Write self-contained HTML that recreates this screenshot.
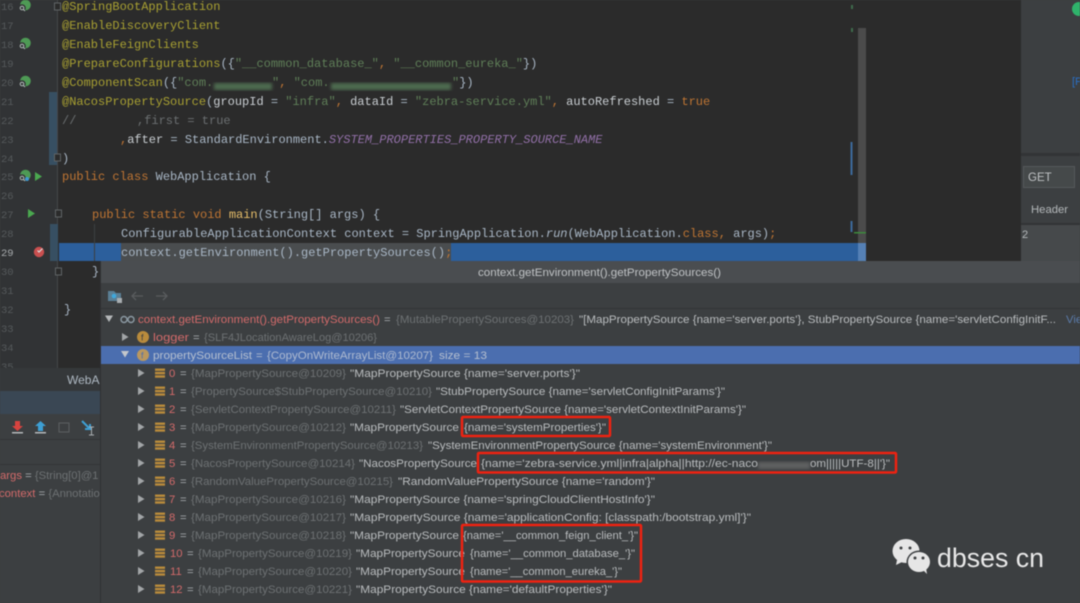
<!DOCTYPE html>
<html><head><meta charset="utf-8"><style>
html,body{margin:0;padding:0;background:#3c3f41;width:1080px;height:603px;overflow:hidden}
svg{display:block}
.m{font-family:"Liberation Mono",monospace;font-size:12px;fill:#a9b7c6}
.s{font-family:"Liberation Sans",sans-serif;font-size:11.3px;fill:#b9bcbe}
.n{font-family:"Liberation Mono",monospace;font-size:10.5px;fill:#55595b}
.y{fill:#a8a032}.g{fill:#5f7f58}.o{fill:#bf7533}.c{fill:#6b6f71}.p{fill:#9270a8;font-style:italic}.w{fill:#c9ced2}.l{font-style:italic}
.r{fill:#d26a6a}.e{fill:#a9aeb1}.d{fill:#6d7173}
</style></head><body>
<svg width="1080" height="603" viewBox="0 0 1080 603" xmlns="http://www.w3.org/2000/svg" style="filter:blur(.45px)">
<defs><filter id="b"><feGaussianBlur stdDeviation="1.6"/></filter>
<g id="bars"><rect x="0" y="0" width="10" height="2.4" fill="#b98b3c"/><rect x="0" y="3.4" width="10" height="2.4" fill="#b98b3c"/><rect x="0" y="6.8" width="10" height="2.4" fill="#b98b3c"/></g>
<path id="ar" d="M0 0L6.5 4L0 8Z" fill="#a2a5a7"/>
<g id="spr"><circle cx="1.500" cy="-1" r="5.300" fill="#4e9a55"/><circle cx="-2" cy="2" r="3.800" fill="#313335"/><circle cx="-2" cy="2" r="1.800" fill="none" stroke="#b5c0bd" stroke-width="1"/><path d="M-.5 3.500l1.500 1.500" stroke="#b5c0bd" stroke-width="1"/></g>
</defs>

<!-- editor -->
<rect width="1021" height="368" fill="#2b2b2b"/>
<rect width="57" height="368" fill="#313335"/>
<rect x="57" width="1" height="368" fill="#444749"/>
<rect x="49" y="92" width="8" height="73" fill="#374f62"/>
<rect x="50" y="224" width="8" height="37" fill="#374f62"/>

<!-- selected line -->
<rect x="59" y="243" width="807" height="18" fill="#2c5f9c"/>
<rect x="121" y="243" width="330" height="18" fill="#4a4d4f"/>
<rect x="94" y="224" width="1" height="37" fill="#3c3f41"/>

<!-- fold marks -->
<g fill="#2b2b2b" stroke="#5f6365" stroke-width="1"><rect x="54.500" y="3" width="6" height="7"/><rect x="54.500" y="154" width="6" height="7"/><rect x="55.500" y="210" width="6" height="7"/><rect x="55.500" y="268" width="6" height="7"/></g>

<!-- line numbers -->
<g class="n"><text x="1" y="10">16</text><text x="1" y="29">17</text><text x="1" y="48">18</text><text x="1" y="67">19</text><text x="1" y="86">20</text><text x="1" y="105">21</text><text x="1" y="124">22</text><text x="1" y="143">23</text><text x="1" y="162">24</text><text x="1" y="180">25</text><text x="1" y="199">26</text><text x="1" y="218">27</text><text x="1" y="237">28</text><text x="1" y="256" style="fill:#a7abad">29</text><text x="1" y="275">30</text><text x="1" y="294">31</text><text x="1" y="313">32</text><text x="1" y="332">33</text><text x="1" y="351">34</text><text x="1" y="370">35</text></g>

<!-- gutter icons -->
<use href="#spr" x="24" y="6"/><use href="#spr" x="24" y="44"/><use href="#spr" x="24" y="82"/><use href="#spr" x="24" y="176"/>
<circle cx="27" cy="179" r="2" fill="#3f9ad0"/>
<path d="M35 172L42 176.5L35 181Z" fill="#4aa84f"/>
<path d="M28 209L35 213.5L28 218Z" fill="#4aa84f"/>
<circle cx="39" cy="252" r="5.2" fill="#c94f4f"/>
<path d="M37.5 250.5l1.5 1.5l3.5-3.5" fill="none" stroke="#dcdcdc" stroke-width="1.2"/>

<!-- code -->
<g class="m">
<text x="62" y="10" class="y">@SpringBootApplication</text>
<text x="62" y="29" class="y">@EnableDiscoveryClient</text>
<text x="62" y="48" class="y">@EnableFeignClients</text>
<text x="62" y="67"><tspan class="y">@PrepareConfigurations</tspan>({<tspan class="g">"__common_database_"</tspan><tspan class="o">,</tspan> <tspan class="g">"__common_eureka_"</tspan>})</text>
<text x="62" y="86"><tspan class="y">@ComponentScan</tspan>({<tspan class="g">"com.</tspan></text>
<text x="272" y="86"><tspan class="g">"</tspan><tspan class="o">,</tspan> <tspan class="g">"com.</tspan></text>
<text x="452" y="86"><tspan class="g">"</tspan>})</text>
<text x="62" y="105"><tspan class="y">@NacosPropertySource</tspan>(<tspan class="w">groupId</tspan> = <tspan class="g">"infra"</tspan><tspan class="o">,</tspan> <tspan class="w">dataId</tspan> = <tspan class="g">"zebra-service.yml"</tspan><tspan class="o">,</tspan> <tspan class="w">autoRefreshed</tspan> = <tspan class="o">true</tspan></text>
<text x="62" y="124" class="c">//</text>
<text x="137" y="124" class="c">,first = true</text>
<text x="120" y="143"><tspan class="o">,</tspan><tspan class="w">after</tspan> = StandardEnvironment.<tspan class="p">SYSTEM_PROPERTIES_PROPERTY_SOURCE_NAME</tspan></text>
<text x="62" y="162">)</text>
<text x="62" y="180"><tspan class="o">public class</tspan> WebApplication {</text>
<text x="92" y="218"><tspan class="o">public static void</tspan> <tspan fill="#e8bf6a">main</tspan>(String[] args) {</text>
<text x="121" y="237">ConfigurableApplicationContext context = SpringApplication.<tspan class="l">run</tspan>(WebApplication.<tspan class="o">class</tspan><tspan class="o">,</tspan> args)<tspan class="o">;</tspan></text>
<text x="121" y="256">context.getEnvironment().getPropertySources()<tspan class="o">;</tspan></text>
<text x="92" y="275">}</text>
<text x="64" y="313">}</text>
</g>
<rect x="214" y="83" width="58" height="7" fill="#4d6a50" filter="url(#b)"/>
<rect x="331" y="83" width="120" height="7" fill="#4d6a50" filter="url(#b)"/>

<!-- scrollbar -->
<rect x="858" y="28" width="8" height="233" fill="#4b4b4b"/>
<rect x="858" y="243" width="8" height="18" fill="#5580b5"/>
<rect x="851" y="5" width="2" height="4" fill="#3f6b4c"/><rect x="851" y="28" width="2" height="4" fill="#3f6b4c"/>
<rect x="850.5" y="142" width="2" height="33" fill="#3c6a9b"/><rect x="850.5" y="221" width="2" height="11" fill="#3c6a9b"/>
<rect x="854" y="232" width="12" height="1.5" fill="#3c8a3c"/>

<!-- right panel -->
<rect x="1021" width="59" height="261" fill="#3c3f41"/>
<rect x="1021" y="153" width="59" height="3" fill="#323436"/>
<rect x="1023.5" y="166.5" width="51" height="21" fill="#45494a" stroke="#55585a"/>
<text x="1028" y="181" class="s" style="font-size:11.5px;fill:#bfc2c4">GET</text>
<text x="1031" y="213" class="s" style="font-size:11.3px;fill:#b4b8ba">Header</text>
<rect x="1021" y="223" width="59" height="2" fill="#323436"/>
<rect x="1021" y="225" width="59" height="36" fill="#46494b"/>
<text x="1022" y="238" class="s" style="font-size:11px;fill:#b4b8ba">2</text>
<circle cx="1079" cy="9" r="7" fill="#2fb36b"/>
<text x="1072" y="85" class="s" style="font-size:11px;fill:#2a6fc4">[P</text>

<!-- left bottom panel -->
<rect y="368" width="101" height="23" fill="#35383a"/>
<text x="67" y="384" class="s" style="font-size:12px;fill:#aeb8c2">WebAp</text>
<rect y="391" width="101" height="23" fill="#3a4754"/>
<rect y="414" width="101" height="189" fill="#3c3f41"/>
<rect y="439" width="101" height="1" fill="#333537"/><rect y="464" width="101" height="1" fill="#333537"/>
<path d="M15 421h5v5h3l-5.500 5l-5.500-5h3z" fill="#d8433f"/><rect x="12" y="432" width="11" height="1.500" fill="#b5b8ba"/>
<path d="M40.500 421l5.500 5h-3v5h-5v-5h-3z" fill="#3d9fd4"/><rect x="35" y="432" width="11" height="1.500" fill="#b5b8ba"/>
<rect x="59" y="423" width="10" height="9" fill="none" stroke="#5c5f61"/>
<path d="M82 421l8 8M90 424v5h-5" fill="none" stroke="#3d9fd4" stroke-width="2"/>
<path d="M89 427h5M91.500 427v8M89 435h5" fill="none" stroke="#a9aeb1"/>
<text x="0" y="479" class="s"><tspan class="r">args</tspan><tspan class="e"> = </tspan><tspan class="d">{String[0]@1</tspan></text>
<text x="-1" y="497" class="s"><tspan class="r">context</tspan><tspan class="e"> = </tspan><tspan class="d">{Annotatio</tspan></text>

<!-- popup -->
<rect x="100" y="261" width="980" height="342" fill="#3c3f41"/>
<rect x="100" y="261" width="1" height="342" fill="#2f3133"/>
<rect x="101" y="261" width="979" height="22" fill="#4a4d50"/>
<text x="478" y="276" class="s" textLength="243" lengthAdjust="spacingAndGlyphs" style="fill:#bfc2c4">context.getEnvironment().getPropertySources()</text>
<rect x="101" y="308" width="979" height="1" fill="#323436"/>
<path d="M108 291h6l2 2h5v8h-13z" fill="#5b7f95"/><circle cx="114" cy="296" r="2.300" fill="#3fa8dc"/><rect x="117" y="298" width="5" height="5" fill="#a8adb0"/>
<path d="M143 296h-11m4-4l-4 4l4 4M156 296h11m-4-4l4 4l-4 4" fill="none" stroke="#595c5e" stroke-width="1.300"/>

<!-- tree header rows -->
<rect x="101" y="346" width="979" height="18" fill="#4b6eaf"/>
<path d="M105 315.500h8l-4 6.500z" fill="#b4b7b9"/>
<circle cx="124" cy="319.500" r="3" fill="none" stroke="#8c9aa3" stroke-width="1.400"/><circle cx="131" cy="319.500" r="3" fill="none" stroke="#8c9aa3" stroke-width="1.400"/>
<text x="138" y="323" class="s" textLength="242" lengthAdjust="spacingAndGlyphs" style="fill:#d26a6a">context.getEnvironment().getPropertySources()</text>
<text x="384" y="323" class="s e">=</text>
<text x="396" y="323" class="s d" textLength="178" lengthAdjust="spacingAndGlyphs">{MutablePropertySources@10203}</text>
<text x="579" y="323" class="s" textLength="477" lengthAdjust="spacingAndGlyphs">"[MapPropertySource {name='server.ports'}, StubPropertySource {name='servletConfigInitF...</text>
<text x="1066" y="323" class="s" style="fill:#5a7aa8">Vie</text>

<use href="#ar" x="122" y="333"/>
<circle cx="143" cy="337" r="6" fill="#b98b3c"/><text x="141" y="340.500" class="s" style="font-size:9px;fill:#3c3f41">f</text>
<text x="153" y="341" class="s r" textLength="36" lengthAdjust="spacingAndGlyphs">logger</text>
<text x="193" y="341" class="s e">=</text>
<text x="204" y="341" class="s d" textLength="173" lengthAdjust="spacingAndGlyphs">{SLF4JLocationAwareLog@10206}</text>

<path d="M121 351h8l-4 6.500z" fill="#c3c7cb"/>
<circle cx="143" cy="355" r="6" fill="#b9975e"/><text x="141" y="358.500" class="s" style="font-size:9px;fill:#4b6eaf">f</text>
<text x="153" y="359" class="s" textLength="99" lengthAdjust="spacingAndGlyphs" style="fill:#b5bfcf">propertySourceList</text>
<text x="256" y="359" class="s" style="fill:#b5bfcf">=</text>
<text x="267" y="359" class="s" textLength="166" lengthAdjust="spacingAndGlyphs" style="fill:#aebad0">{CopyOnWriteArrayList@10207}</text>
<text x="439" y="359" class="s" textLength="48" lengthAdjust="spacingAndGlyphs" style="fill:#b5bfcf">size = 13</text>

<!-- arrows and icons for rows -->
<use href="#ar" x="138" y="369"/><use href="#ar" x="138" y="387"/><use href="#ar" x="138" y="405"/><use href="#ar" x="138" y="423"/><use href="#ar" x="138" y="441"/><use href="#ar" x="138" y="459"/><use href="#ar" x="138" y="477"/><use href="#ar" x="138" y="495"/><use href="#ar" x="138" y="513"/><use href="#ar" x="138" y="531"/><use href="#ar" x="138" y="549"/><use href="#ar" x="138" y="567"/><use href="#ar" x="138" y="585"/>
<use href="#bars" x="155" y="368.500"/><use href="#bars" x="155" y="386.500"/><use href="#bars" x="155" y="404.500"/><use href="#bars" x="155" y="422.500"/><use href="#bars" x="155" y="440.500"/><use href="#bars" x="155" y="458.500"/><use href="#bars" x="155" y="476.500"/><use href="#bars" x="155" y="494.500"/><use href="#bars" x="155" y="512.500"/><use href="#bars" x="155" y="530.500"/><use href="#bars" x="155" y="548.500"/><use href="#bars" x="155" y="566.500"/><use href="#bars" x="155" y="584.500"/>

<!-- rows -->
<g class="s">
<text x="169" y="377" class="r">0</text><text x="180" y="377" class="e">=</text><text x="191" y="377" class="d" textLength="155" lengthAdjust="spacingAndGlyphs">{MapPropertySource@10209}</text><text x="350" y="377" textLength="230" lengthAdjust="spacingAndGlyphs">"MapPropertySource {name='server.ports'}"</text>
<text x="169" y="395" class="r">1</text><text x="180" y="395" class="e">=</text><text x="191" y="395" class="d" textLength="241" lengthAdjust="spacingAndGlyphs">{PropertySource$StubPropertySource@10210}</text><text x="436" y="395" textLength="289" lengthAdjust="spacingAndGlyphs">"StubPropertySource {name='servletConfigInitParams'}"</text>
<text x="169" y="413" class="r">2</text><text x="180" y="413" class="e">=</text><text x="191" y="413" class="d" textLength="205" lengthAdjust="spacingAndGlyphs">{ServletContextPropertySource@10211}</text><text x="400" y="413" textLength="346" lengthAdjust="spacingAndGlyphs">"ServletContextPropertySource {name='servletContextInitParams'}"</text>
<text x="169" y="431" class="r">3</text><text x="180" y="431" class="e">=</text><text x="191" y="431" class="d" textLength="155" lengthAdjust="spacingAndGlyphs">{MapPropertySource@10212}</text><text x="350" y="431" textLength="109" lengthAdjust="spacingAndGlyphs">"MapPropertySource</text><text x="464" y="431" textLength="142" lengthAdjust="spacingAndGlyphs">{name='systemProperties'}"</text>
<text x="169" y="449" class="r">4</text><text x="180" y="449" class="e">=</text><text x="191" y="449" class="d" textLength="232" lengthAdjust="spacingAndGlyphs">{SystemEnvironmentPropertySource@10213}</text><text x="428" y="449" textLength="344" lengthAdjust="spacingAndGlyphs">"SystemEnvironmentPropertySource {name='systemEnvironment'}"</text>
<text x="169" y="467" class="r">5</text><text x="180" y="467" class="e">=</text><text x="191" y="467" class="d" textLength="164" lengthAdjust="spacingAndGlyphs">{NacosPropertySource@10214}</text><text x="359" y="467" textLength="118" lengthAdjust="spacingAndGlyphs">"NacosPropertySource</text><text x="481" y="467" textLength="277" lengthAdjust="spacingAndGlyphs">{name='zebra-service.yml|infra|alpha||http://ec-naco</text><text x="810" y="467" textLength="80" lengthAdjust="spacingAndGlyphs">om|||||UTF-8||'}"</text>
<text x="169" y="485" class="r">6</text><text x="180" y="485" class="e">=</text><text x="191" y="485" class="d" textLength="202" lengthAdjust="spacingAndGlyphs">{RandomValuePropertySource@10215}</text><text x="398" y="485" textLength="257" lengthAdjust="spacingAndGlyphs">"RandomValuePropertySource {name='random'}"</text>
<text x="169" y="503" class="r">7</text><text x="180" y="503" class="e">=</text><text x="191" y="503" class="d" textLength="155" lengthAdjust="spacingAndGlyphs">{MapPropertySource@10216}</text><text x="350" y="503" textLength="305" lengthAdjust="spacingAndGlyphs">"MapPropertySource {name='springCloudClientHostInfo'}"</text>
<text x="169" y="521" class="r">8</text><text x="180" y="521" class="e">=</text><text x="191" y="521" class="d" textLength="155" lengthAdjust="spacingAndGlyphs">{MapPropertySource@10217}</text><text x="350" y="521" textLength="401" lengthAdjust="spacingAndGlyphs">"MapPropertySource {name='applicationConfig: [classpath:/bootstrap.yml]'}"</text>
<text x="169" y="539" class="r">9</text><text x="180" y="539" class="e">=</text><text x="191" y="539" class="d" textLength="155" lengthAdjust="spacingAndGlyphs">{MapPropertySource@10218}</text><text x="350" y="539" textLength="109" lengthAdjust="spacingAndGlyphs">"MapPropertySource</text><text x="463" y="539" textLength="175" lengthAdjust="spacingAndGlyphs">{name='__common_feign_client_'}"</text>
<text x="170" y="557" class="r">10</text><text x="187" y="557" class="e">=</text><text x="198" y="557" class="d" textLength="154" lengthAdjust="spacingAndGlyphs">{MapPropertySource@10219}</text><text x="356" y="557" textLength="109" lengthAdjust="spacingAndGlyphs">"MapPropertySource</text><text x="470" y="557" textLength="165" lengthAdjust="spacingAndGlyphs">{name='__common_database_'}"</text>
<text x="170" y="575" class="r">11</text><text x="187" y="575" class="e">=</text><text x="198" y="575" class="d" textLength="154" lengthAdjust="spacingAndGlyphs">{MapPropertySource@10220}</text><text x="356" y="575" textLength="109" lengthAdjust="spacingAndGlyphs">"MapPropertySource</text><text x="470" y="575" textLength="152" lengthAdjust="spacingAndGlyphs">{name='__common_eureka_'}"</text>
<text x="170" y="593" class="r">12</text><text x="187" y="593" class="e">=</text><text x="198" y="593" class="d" textLength="154" lengthAdjust="spacingAndGlyphs">{MapPropertySource@10221}</text><text x="356" y="593" textLength="256" lengthAdjust="spacingAndGlyphs">"MapPropertySource {name='defaultProperties'}"</text>
</g>
<rect x="758" y="462" width="52" height="7" fill="#777" opacity=".6" filter="url(#b)"/>

<!-- red boxes -->
<g fill="none" stroke="#ee2211" stroke-width="2.500">
<rect x="462" y="417" width="148" height="19" rx="1"/>
<rect x="478" y="453" width="418" height="19.500" rx="1"/>
<rect x="462" y="525" width="179" height="56.500" rx="1"/>
</g>

<!-- watermark -->
<g fill="#e6e6e6">
<ellipse cx="906" cy="551" rx="13.500" ry="12"/>
<path d="M897 560l-1 5l6-3z"/>
</g>
<ellipse cx="919" cy="562" rx="12.500" ry="11.500" fill="#3c3f41"/>
<ellipse cx="919" cy="562" rx="11" ry="10" fill="#e6e6e6"/>
<path d="M923 570l4 4l-1-6z" fill="#e6e6e6"/>
<circle cx="901" cy="548" r="1.500" fill="#3c3f41"/><circle cx="910" cy="548" r="1.500" fill="#3c3f41"/>
<circle cx="915" cy="558" r="1.500" fill="#3c3f41"/><circle cx="923" cy="558" r="1.500" fill="#3c3f41"/>
<text x="937" y="567" textLength="107" lengthAdjust="spacingAndGlyphs" style="font-family:'Liberation Sans',sans-serif;font-size:27px;fill:#e8e8e8">dbses cn</text>
</svg>
</body></html>
